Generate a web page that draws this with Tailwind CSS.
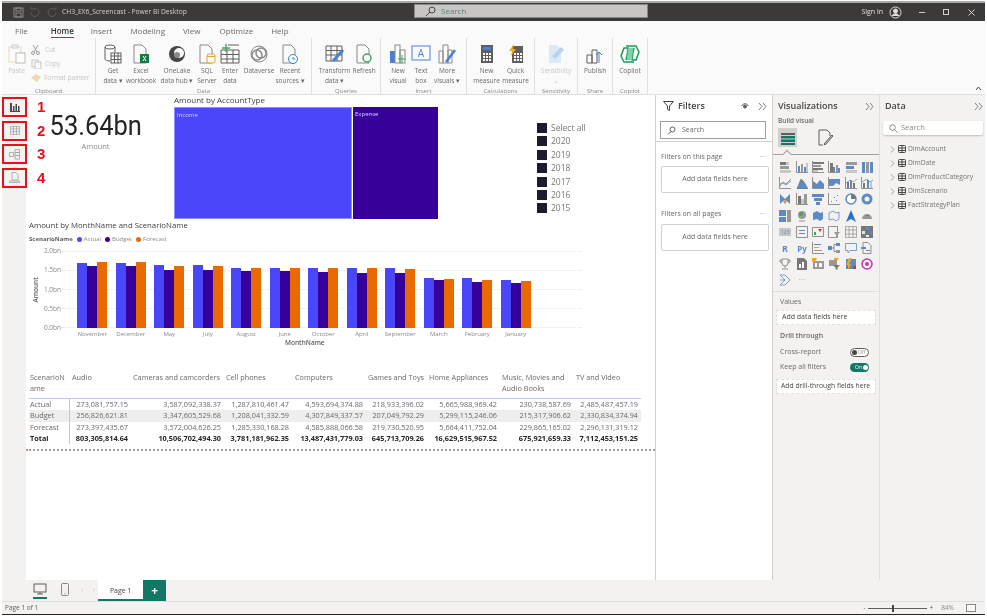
<!DOCTYPE html>
<html lang="en">
<head>
  <meta charset="UTF-8" />
  <title>CH3_EX6_Screencast - Power BI Desktop</title>
  <script src="https://cdn.jsdelivr.net/npm/@tailwindcss/browser@4"></script>
</head>
<body class="bg-white">
<div class="w-[987px] h-[616px] overflow-hidden flex flex-col pt-px px-[2px] font-['Open_Sans',sans-serif] text-[#6b6967] blur-[0.35px]">
  <div class="h-[2px] shrink-0 bg-[#a8a8a8]"></div>

  <!-- title bar -->
  <div class="h-[18px] shrink-0 bg-[#3b3a39] flex items-center relative text-[#d2d0ce]">
    <svg class="ml-[11px]" width="11" height="11" viewBox="0 0 11 11" fill="none" stroke="#8a8886"><rect x="1" y="1" width="9" height="9"/><rect x="3" y="1" width="5" height="3"/><rect x="3" y="6" width="5" height="4"/></svg>
    <svg class="ml-[5px]" width="11" height="11" viewBox="0 0 11 11" fill="none" stroke="#605e5c"><path d="M2 6a4 4 0 1 0 2-4H2V0"/></svg>
    <svg class="ml-[7px]" width="11" height="11" viewBox="0 0 11 11" fill="none" stroke="#605e5c"><path d="M9 6a4 4 0 1 1-2-4h2V0"/></svg>
    <span class="ml-[4px] text-[6.7px]">CH3_EX6_Screencast - Power BI Desktop</span>
    <div class="absolute left-[412px] top-[1px] w-[234px] h-[14px] bg-[#c8c6c4] border border-[#8a8886] flex items-center pl-[10px]">
      <svg width="11" height="11" viewBox="0 0 11 11" fill="none" stroke="#484644"><circle cx="7" cy="4" r="3"/><path d="M5 6 1 10"/></svg>
      <span class="ml-[5px] text-[8px] text-[#5f7f78]">Search</span>
    </div>
    <span class="ml-auto text-[7px] text-[#e1dfdd]">Sign in</span>
    <svg class="ml-[6px]" width="13" height="13" viewBox="0 0 13 13" fill="none" stroke="#e1dfdd"><circle cx="6.5" cy="6.5" r="5.5"/><circle cx="6.5" cy="5" r="2" fill="#e1dfdd"/><path d="M3 10c1-3 6-3 7 0" fill="#e1dfdd"/></svg>
    <span class="ml-[17px] w-[6px] h-px bg-[#d2d0ce]"></span>
    <span class="ml-[18px] w-[6px] h-[6px] border border-[#d2d0ce]"></span>
    <svg class="ml-[19px] mr-[10px]" width="7" height="7" viewBox="0 0 7 7" stroke="#d2d0ce"><path d="M.5.5l6 6M6.5.5l-6 6"/></svg>
  </div>

  <!-- menu -->
  <div class="h-[17px] shrink-0 bg-[#fafafa] flex items-center text-[8px] text-[#6b6967] pt-[3px]">
    <span class="ml-[13px]">File</span>
    <span class="ml-[23px] relative text-[#323130] font-semibold">Home<span class="absolute left-0 right-0 top-[12px] h-[2px] bg-[#117865]"></span></span>
    <span class="ml-[17px]">Insert</span>
    <span class="ml-[18px]">Modeling</span>
    <span class="ml-[18px]">View</span>
    <span class="ml-[19px]">Optimize</span>
    <span class="ml-[18px]">Help</span>
  </div>

  <!-- ribbon -->
  <div class="h-[57px] shrink-0 bg-[#fafafa] border-b border-[#e1dfdd] flex text-[6.5px] leading-[9.5px] text-center relative">
    <section class="w-[94px] border-r border-[#e1dfdd] flex flex-col">
      <div class="flex flex-1 pt-[6px] text-[#c8c6c4]">
        <div class="w-[29px] flex flex-col items-center">
          <svg width="18" height="20" viewBox="0 0 18 20" fill="none"><rect x="1" y="3" width="12" height="15" stroke="#ecd9b0"/><rect x="4" y="1" width="6" height="3" fill="#eee" stroke="#ccc"/><rect x="8" y="9" width="9" height="10" fill="#fff" stroke="#bbb"/></svg>
          <span class="mt-[2px]">Paste</span>
        </div>
        <div class="flex flex-col items-start gap-[4px] text-left pt-px">
          <span class="flex items-center gap-[5px] h-[10px]"><svg width="9" height="10" viewBox="0 0 9 10" fill="none" stroke="#a19f9d"><path d="M2 0l4 7M7 0 3 7"/><circle cx="2" cy="8" r="1.5"/><circle cx="7" cy="8" r="1.5"/></svg>Cut</span>
          <span class="flex items-center gap-[3px] h-[10px]"><svg width="11" height="10" viewBox="0 0 11 10" fill="none" stroke="#c8c6c4"><rect x="1" y="1" width="6" height="7"/><rect x="4" y="3" width="6" height="7" fill="#fafafa"/></svg>Copy</span>
          <span class="flex items-center gap-[2px] h-[10px] whitespace-nowrap"><svg width="11" height="10" viewBox="0 0 11 10" fill="#ecd9b0"><path d="M0 5l5-4 5 3-4 5z"/></svg>Format painter</span>
        </div>
      </div>
      <div class="h-[8px] leading-[10px] text-[#8a8886] text-[6px]">Clipboard</div>
    </section>

    <section class="w-[216px] border-r border-[#e1dfdd] flex flex-col">
      <div class="flex flex-1 pt-[6px] pl-[4px]">
        <div class="w-[26px] flex flex-col items-center">
          <svg width="18" height="20" viewBox="0 0 18 20" fill="none" stroke="#605e5c"><ellipse cx="6" cy="3" rx="5" ry="2"/><path d="M1 3v12c0 1 2 2 5 2M11 3v5"/><rect x="7" y="9" width="10" height="10" fill="#fafafa"/><path d="M7 12h10M7 15.5h10M10.5 9v10M14 9v10"/></svg>
          <span class="mt-[2px]">Get<br>data ▾</span>
        </div>
        <div class="w-[30px] flex flex-col items-center">
          <svg width="18" height="20" viewBox="0 0 18 20" fill="none"><path d="M2 1h8l4 4v14H2z" stroke="#8a8886"/><rect x="8" y="10" width="9" height="9" fill="#107c41"/><path d="M11 12l3 5M14 12l-3 5" stroke="#fff"/></svg>
          <span class="mt-[2px]">Excel<br>workbook</span>
        </div>
        <div class="ml-[3px] w-[36px] flex flex-col items-center">
          <svg width="20" height="20" viewBox="0 0 20 20" fill="none"><circle cx="10" cy="10" r="8" fill="#484644"/><circle cx="12" cy="9" r="5" fill="#fafafa"/><circle cx="10" cy="11" r="3" fill="#8a8886"/></svg>
          <span class="mt-[2px] whitespace-nowrap">OneLake<br>data hub ▾</span>
        </div>
        <div class="w-[24px] flex flex-col items-center">
          <svg width="18" height="20" viewBox="0 0 18 20" fill="none"><path d="M2 1h8l4 4v14H2z" stroke="#8a8886"/><rect x="9" y="10" width="8" height="9" rx="2" fill="#fafafa" stroke="#e8a33d"/><path d="M9 12.5h8" stroke="#e8a33d"/></svg>
          <span class="mt-[2px]">SQL<br>Server</span>
        </div>
        <div class="w-[22px] flex flex-col items-center">
          <svg width="20" height="20" viewBox="0 0 20 20" fill="none" stroke="#605e5c"><path d="M1 6h18v13H1zM1 10.5h18M1 15h18M7 6v13M13 6v13M8 1h11"/><path d="M6 0v8M2 4h8" stroke="#3fa66c" stroke-width="1.5"/></svg>
          <span class="mt-[2px]">Enter<br>data</span>
        </div>
        <div class="w-[36px] flex flex-col items-center">
          <svg width="20" height="20" viewBox="0 0 20 20" fill="none" stroke="#8a8886" stroke-width="1.5"><circle cx="8" cy="11" r="5"/><circle cx="12" cy="9" r="5"/><circle cx="10" cy="10" r="8" stroke-width="1"/></svg>
          <span class="mt-[2px]">Dataverse</span>
        </div>
        <div class="w-[26px] flex flex-col items-center">
          <svg width="18" height="20" viewBox="0 0 18 20" fill="none"><path d="M2 1h8l4 4v14H2z" stroke="#8a8886"/><circle cx="12" cy="15" r="4.5" fill="#fafafa" stroke="#2b88d8"/><path d="M12 13v2h2" stroke="#2b88d8"/></svg>
          <span class="mt-[2px] whitespace-nowrap">Recent<br>sources ▾</span>
        </div>
      </div>
      <div class="h-[8px] leading-[10px] text-[#8a8886] text-[6px]">Data</div>
    </section>

    <section class="w-[69px] border-r border-[#e1dfdd] flex flex-col">
      <div class="flex flex-1 pt-[6px] pl-[3px]">
        <div class="w-[39px] flex flex-col items-center">
          <svg width="20" height="20" viewBox="0 0 20 20" fill="none"><path d="M1 2h16v15H1zM1 6.5h16M1 11h16M6 2v15M12 2v15" stroke="#605e5c"/><path d="M8 17 18 6" stroke="#4a7fd6" stroke-width="3"/></svg>
          <span class="mt-[2px] whitespace-nowrap">Transform<br>data ▾</span>
        </div>
        <div class="w-[20px] flex flex-col items-center">
          <svg width="18" height="20" viewBox="0 0 18 20" fill="none"><path d="M2 1h8l4 4v14H2z" stroke="#8a8886"/><circle cx="12" cy="14" r="4" fill="#fafafa" stroke="#3fa66c" stroke-width="1.5"/></svg>
          <span class="mt-[2px]">Refresh</span>
        </div>
      </div>
      <div class="h-[8px] leading-[10px] text-[#8a8886] text-[6px]">Queries</div>
    </section>

    <section class="w-[86px] border-r border-[#e1dfdd] flex flex-col">
      <div class="flex flex-1 pt-[6px] pl-[7px]">
        <div class="w-[20px] flex flex-col items-center">
          <svg width="18" height="20" viewBox="0 0 18 20" fill="none"><rect x="1" y="7" width="5" height="12" fill="#4a7fd6"/><rect x="6" y="1" width="5" height="18" stroke="#8a8886"/><rect x="11" y="6" width="5" height="13" stroke="#8a8886"/><path d="M13 11v8M9 15h8" stroke="#3fa66c"/></svg>
          <span class="mt-[2px]">New<br>visual</span>
        </div>
        <div class="w-[26px] flex flex-col items-center">
          <svg width="20" height="20" viewBox="0 0 20 20" fill="none"><rect x="1" y="2" width="18" height="14" stroke="#4a7fd6"/><text x="10" y="13" text-anchor="middle" font-size="10" fill="#4a7fd6">A</text></svg>
          <span class="mt-[2px]">Text<br>box</span>
        </div>
        <div class="w-[26px] flex flex-col items-center">
          <svg width="18" height="20" viewBox="0 0 18 20" fill="none"><path d="M1 7h4v12H1zM5 1h5v18H5zM10 6h4v13h-4z" stroke="#8a8886"/><path d="M8 18 17 6" stroke="#4a7fd6" stroke-width="2.5"/></svg>
          <span class="mt-[2px] whitespace-nowrap">More<br>visuals ▾</span>
        </div>
      </div>
      <div class="h-[8px] leading-[10px] text-[#8a8886] text-[6px]">Insert</div>
    </section>

    <section class="w-[68px] border-r border-[#e1dfdd] flex flex-col">
      <div class="flex flex-1 pt-[6px] pl-[5px]">
        <div class="w-[29px] flex flex-col items-center">
          <svg width="14" height="20" viewBox="0 0 14 20"><rect x="1" y="1" width="12" height="18" fill="#605e5c"/><rect x="3" y="3" width="8" height="3" fill="#4a7fd6"/><path d="M3 9h2v2H3zM6 9h2v2H6zM9 9h2v2H9zM3 12h2v2H3zM6 12h2v2H6zM9 12h2v2H9zM3 15h2v2H3zM6 15h2v2H6zM9 15h2v2H9z" fill="#fff"/></svg>
          <span class="mt-[2px]">New<br>measure</span>
        </div>
        <div class="w-[29px] flex flex-col items-center">
          <svg width="16" height="20" viewBox="0 0 16 20"><rect x="4" y="2" width="11" height="17" fill="#605e5c"/><path d="M6 9h2v2H6zM9 9h2v2H9zM12 9h2v2h-2zM6 12h2v2H6zM9 12h2v2H9zM12 12h2v2h-2zM6 15h2v2H6zM9 15h2v2H9zM12 15h2v2h-2z" fill="#fff"/><path d="M6 0 1 7h3l-1 5 5-7H5z" fill="#f2a71b"/></svg>
          <span class="mt-[2px]">Quick<br>measure</span>
        </div>
      </div>
      <div class="h-[8px] leading-[10px] text-[#8a8886] text-[6px]">Calculations</div>
    </section>

    <section class="w-[43px] border-r border-[#e1dfdd] flex flex-col">
      <div class="flex flex-col flex-1 pt-[6px] items-center text-[#c8c6c4]">
        <svg width="18" height="20" viewBox="0 0 18 20" fill="#dbe8f5"><path d="M2 1h8l4 4v14H2z"/><path d="M5 12 14 3l3 3-9 9z" fill="#b9d3ec"/></svg>
        <span class="mt-[2px]">Sensitivity<br>⌄</span>
      </div>
      <div class="h-[8px] leading-[10px] text-[#8a8886] text-[6px]">Sensitivity</div>
    </section>

    <section class="w-[35px] border-r border-[#e1dfdd] flex flex-col">
      <div class="flex flex-col flex-1 pt-[6px] items-center">
        <svg width="18" height="20" viewBox="0 0 18 20" fill="none"><path d="M1 11h5v8H1zM6 6h5v13H6zM11 10h1" stroke="#605e5c"/><path d="M13 19V8M10 11l3-3 3 3" stroke="#4a7fd6"/></svg>
        <span class="mt-[2px]">Publish</span>
      </div>
      <div class="h-[8px] leading-[10px] text-[#8a8886] text-[6px]">Share</div>
    </section>

    <section class="w-[35px] border-r border-[#e1dfdd] flex flex-col">
      <div class="flex flex-col flex-1 pt-[6px] items-center">
        <svg width="20" height="20" viewBox="0 0 20 20" fill="none" stroke="#1b9a5f" stroke-width="1.5"><path d="M6 2h10l3 6-3 8h-4l1-8 1-4M14 18H4L1 12l3-8h4l-1 8-1 4"/><path d="M8 4h5l-1 12H7z" fill="#7fd1a8" stroke="none"/></svg>
        <span class="mt-[2px]">Copilot</span>
      </div>
      <div class="h-[8px] leading-[10px] text-[#8a8886] text-[6px]">Copilot</div>
    </section>

    <svg class="absolute right-[3px] bottom-[3px]" width="7" height="5" viewBox="0 0 7 5" fill="none" stroke="#484644"><path d="M1 4l2.5-3L6 4"/></svg>
  </div>

  <!-- main -->
  <div class="h-[485px] shrink-0 flex">
    <!-- view rail -->
    <div class="w-[24px] shrink-0 bg-[#f3f2f1] flex flex-col pt-[2px] gap-[3.5px] relative z-10">
      <div class="w-[25px] h-[20px] border-2 border-[#e8101a] flex items-center justify-center relative">
        <svg width="10" height="9" viewBox="0 0 10 9" fill="#484644"><path d="M1 0h1v8h8v1H0V0zM3 3h1.5v5H3zM5.5 1H7v7H5.5zM8 3h1.500v5H8z"/></svg>
        <span class="absolute left-[33px] -top-[1px] text-[15px] leading-[18px] font-bold text-[#e8101a] font-['Liberation_Sans',sans-serif]">1</span>
      </div>
      <div class="w-[25px] h-[20px] border-2 border-[#e8101a] flex items-center justify-center relative">
        <svg width="10" height="9" viewBox="0 0 10 9" fill="none" stroke="#a19f9d" stroke-width=".7"><path d="M.5.5h9v8h-9zM.5 3h9M.5 5.7h9M3.500.5v8M6.500.5v8"/></svg>
        <span class="absolute left-[33px] -top-[1px] text-[15px] leading-[18px] font-bold text-[#e8101a] font-['Liberation_Sans',sans-serif]">2</span>
      </div>
      <div class="w-[25px] h-[20px] border-2 border-[#e8101a] flex items-center justify-center relative">
        <svg width="11" height="11" viewBox="0 0 11 11" fill="none" stroke="#a19f9d" stroke-width=".8"><path d="M.5 3.5h4v4h-4zM6 .5h4.500v3H6zM6 3.500h4.500v3H6zM6 6.500h4.500v3.500H6z"/></svg>
        <span class="absolute left-[33px] -top-[1px] text-[15px] leading-[18px] font-bold text-[#e8101a] font-['Liberation_Sans',sans-serif]">3</span>
      </div>
      <div class="w-[25px] h-[20px] border-2 border-[#e8101a] flex items-center justify-center relative">
        <svg width="11" height="11" viewBox="0 0 11 11" fill="none" stroke="#a19f9d" stroke-width=".8"><path d="M3 .5h4l2 2.500v5H3zM.5 9h10v1.500H.5z"/></svg>
        <span class="absolute left-[33px] -top-[1px] text-[15px] leading-[18px] font-bold text-[#e8101a] font-['Liberation_Sans',sans-serif]">4</span>
      </div>
    </div>

    <!-- report canvas -->
    <div class="w-[630px] shrink-0 bg-white border-r border-[#d2d0ce] flex flex-col">
      <div class="flex h-[124px] shrink-0">
        <div class="w-[148px] shrink-0 flex flex-col items-center pt-[16px] pr-[9px]">
          <span class="text-[28px] leading-[30px] text-[#252423] font-['Roboto',sans-serif] scale-x-[0.91] whitespace-nowrap">53.64bn</span>
          <span class="text-[7.5px] text-[#8a8886]">Amount</span>
        </div>
        <div class="w-[264px] shrink-0 flex flex-col">
          <div class="h-[12px] text-[8px] leading-[10px] text-[#404040] whitespace-nowrap">Amount by AccountType</div>
          <div class="flex h-[112px] gap-px text-[6px] text-[#d8d8ff]">
            <div class="w-[178px] bg-[#4a47fb] pl-[2px] pt-[3px] border border-[#8f8dff]">Income</div>
            <div class="flex-1 bg-[#38009b] pl-[2px] pt-[3px]">Expense</div>
          </div>
        </div>
        <ul class="ml-[99px] mt-[28px] flex flex-col gap-[3.4px] text-[8.5px] leading-[10px] text-[#777]">
          <li class="flex items-center gap-[4px]"><span class="w-[10px] h-[10px] bg-[#1f1b2e]"></span>Select all</li>
          <li class="flex items-center gap-[4px]"><span class="w-[10px] h-[10px] bg-[#1f1b2e]"></span>2020</li>
          <li class="flex items-center gap-[4px]"><span class="w-[10px] h-[10px] bg-[#1f1b2e]"></span>2019</li>
          <li class="flex items-center gap-[4px]"><span class="w-[10px] h-[10px] bg-[#1f1b2e]"></span>2018</li>
          <li class="flex items-center gap-[4px]"><span class="w-[10px] h-[10px] bg-[#1f1b2e]"></span>2017</li>
          <li class="flex items-center gap-[4px]"><span class="w-[10px] h-[10px] bg-[#1f1b2e]"></span>2016</li>
          <li class="flex items-center gap-[4px]"><span class="w-[10px] h-[10px] bg-[#1f1b2e]"></span>2015</li>
        </ul>
      </div>

      <!-- column chart -->
      <div class="h-[128px] shrink-0 pl-[3px] flex flex-col">
        <div class="text-[7.8px] leading-[10px] text-[#404040] h-[16px] pt-[1px]">Amount by MonthName and ScenarioName</div>
        <div class="flex items-center gap-[2px] text-[6px] leading-[8px] h-[8px] text-[#8a8886]">
          <span class="font-bold text-[#605e5c] mr-[2px]">ScenarioName</span>
          <span class="w-[5px] h-[5px] rounded-full bg-[#4a47fb]"></span>Actual
          <span class="w-[5px] h-[5px] rounded-full bg-[#38009b] ml-[2px]"></span>Budget
          <span class="w-[5px] h-[5px] rounded-full bg-[#e96a00] ml-[2px]"></span>Forecast
        </div>
        <div class="flex mt-[5px]">
          <div class="w-[13px] flex items-center justify-center"><span class="-rotate-90 text-[6.5px] font-semibold text-[#605e5c]">Amount</span></div>
          <div class="w-[19px] h-[83px] flex flex-col justify-between text-[6.5px] leading-[6px] text-[#8a8886] text-right">
            <span>2.0bn</span><span>1.5bn</span><span>1.0bn</span><span>0.5bn</span><span>0.0bn</span>
          </div>
          <div class="relative ml-[1px] w-[520px]">
            <div class="absolute inset-x-0 top-[3px] h-[77px] flex flex-col justify-between">
              <i class="border-t border-dotted border-[#e5e5e5]"></i><i class="border-t border-dotted border-[#e5e5e5]"></i><i class="border-t border-dotted border-[#e5e5e5]"></i><i class="border-t border-dotted border-[#e5e5e5]"></i><i class="border-t border-dotted border-[#e5e5e5]"></i>
            </div>
            <div id="bars" class="relative h-[80px] flex items-end pl-[15px] gap-[8.5px]"></div>
          </div>
        </div>
      </div>
      <div id="months" class="flex pl-[47px] h-[8px] text-[6px] leading-[8px] text-[#8a8886] -mt-[17px]"></div>
      <div class="pl-[259px] text-[6.5px] leading-[8px] font-semibold text-[#605e5c] mt-[1px]">MonthName</div>

      <!-- matrix -->
      <div class="mt-[23px] ml-[3px] w-[612px] text-[7.3px] leading-[11.3px] text-[#6b6967]">
        <div class="grid grid-cols-[41px_61px_93px_68px_74px_61px_73px_74px_67px] h-[29px] border-b border-[#b6c8f2] pt-[2px]">
          <div class="pl-[1px] pr-[3px] break-all">ScenarioName</div>
          <div class="pl-[2px]">Audio</div>
          <div class="pl-[2px]">Cameras and camcorders</div>
          <div class="pl-[2px]">Cell phones</div>
          <div class="pl-[3px]">Computers</div>
          <div class="pl-[2px] whitespace-nowrap">Games and Toys</div>
          <div class="pl-[2px] whitespace-nowrap">Home Appliances</div>
          <div class="pl-[2px]">Music, Movies and Audio Books</div>
          <div class="pl-[2px]">TV and Video</div>
        </div>
        <div id="rows"></div>
      </div>
      <div class="mt-[5px] border-t-2 border-dotted border-[#a19f9d]"></div>
    </div>

    <!-- filters -->
    <div class="w-[117px] shrink-0 bg-white border-r border-[#d2d0ce] flex flex-col">
      <div class="h-[22px] flex items-center pl-[7px] pr-[5px]">
        <svg width="11" height="10" viewBox="0 0 11 10" fill="none" stroke="#484644"><path d="M.5.5h10L6.500 5v4.500l-2-1V5z"/></svg>
        <span class="ml-[4px] text-[9px] font-semibold text-[#484644]">Filters</span>
        <svg class="ml-auto" width="8" height="6" viewBox="0 0 8 6" fill="none" stroke="#605e5c"><path d="M.5 3c2-3 5-3 7 0"/><circle cx="4" cy="3.5" r="1.5" fill="#605e5c"/></svg>
        <svg class="ml-[9px]" width="9" height="9" viewBox="0 0 9 9" fill="none" stroke="#605e5c" stroke-width=".8"><path d="M1 1l3 3.500-3 3.500M5 1l3 3.500-3 3.500"/></svg>
      </div>
      <div class="mt-[4px] ml-[4px] w-[106px] h-[18px] border border-[#a19f9d] flex items-center pl-[6px] text-[7px]">
        <svg width="9" height="9" viewBox="0 0 9 9" fill="none" stroke="#605e5c"><circle cx="5.5" cy="3.5" r="2.5"/><path d="M4 5.5 1 8.5"/></svg>
        <span class="ml-[6px]">Search</span>
      </div>
      <div class="mt-[2px] h-[1px] bg-[#d2d0ce]"></div>
      <div class="flex items-center justify-between pl-[5px] pr-[7px] mt-[10px] h-[10px] text-[7px]"><span>Filters on this page</span><span class="text-[#a19f9d]">···</span></div>
      <div class="mt-[4px] ml-[5px] w-[108px] h-[27px] border border-[#d2d0ce] rounded-[2px] flex items-center justify-center text-[7px]">Add data fields here</div>
      <div class="flex items-center justify-between pl-[5px] pr-[7px] mt-[16px] h-[10px] text-[7px]"><span>Filters on all pages</span><span class="text-[#a19f9d]">···</span></div>
      <div class="mt-[5px] ml-[5px] w-[108px] h-[27px] border border-[#d2d0ce] rounded-[2px] flex items-center justify-center text-[7px]">Add data fields here</div>
    </div>

    <!-- visualizations -->
    <div class="w-[107px] shrink-0 bg-[#f3f2f1] border-r border-[#e1dfdd] flex flex-col">
      <div class="h-[21px] flex items-center pl-[5px] pt-[1px] pr-[5px] justify-between">
        <span class="text-[9px] font-semibold text-[#484644]">Visualizations</span>
        <svg width="9" height="9" viewBox="0 0 9 9" fill="none" stroke="#605e5c" stroke-width=".8"><path d="M1 1l3 3.500-3 3.500M5 1l3 3.500-3 3.500"/></svg>
      </div>
      <div class="pl-[5px] text-[6.5px] leading-[9px] font-semibold h-[11px]">Build visual</div>
      <div class="flex items-center h-[21px] pl-[5px]">
        <div class="w-[19px] h-[19px] bg-[#d2d0ce] flex items-center justify-center">
          <svg width="14" height="14" viewBox="0 0 14 14"><path d="M0 2h14v2H0z" fill="#605e5c"/><path d="M0 5h14v2.500H0zM0 8.500h14V11H0zM0 12h14v2H0z" fill="#117865"/></svg>
        </div>
        <svg class="ml-[21px]" width="16" height="18" viewBox="0 0 16 18" fill="none" stroke="#605e5c"><path d="M1 1h8l3 3v3M1 1v15h4"/><path d="M6 15 14 6l1 1-8 9z" fill="#c8c6c4"/></svg>
      </div>
      <div class="relative mt-[6px] h-px bg-[#a19f9d]"><span class="absolute left-[11px] -top-[3px] w-[6px] h-[6px] rotate-45 bg-[#f3f2f1] border-l border-t border-[#a19f9d]"></span></div>
      <div id="viz" class="grid grid-cols-[repeat(6,16.4px)] auto-rows-[16.2px] pl-[4px] mt-[4px] h-[132px] justify-items-center items-center"></div>
      <div class="h-px bg-[#e1dfdd]"></div>
      <div class="pl-[7px] mt-[5px] text-[7px] leading-[10px] h-[13px]">Values</div>
      <div class="mx-[3px] h-[15px] bg-white border border-dashed border-[#e1dfdd] flex items-center pl-[5px] text-[7px] text-[#484644]">Add data fields here</div>
      <div class="pl-[7px] mt-[6px] text-[7px] leading-[10px] font-semibold h-[12px]">Drill through</div>
      <div class="flex items-center justify-between pl-[7px] pr-[10px] mt-[2px] h-[15px] text-[7px]">
        <span>Cross-report</span>
        <span class="w-[19px] h-[9px] rounded-full border border-[#605e5c] bg-white flex items-center pl-[1px] text-[5px] leading-[5px] text-[#8a8886]"><i class="w-[5px] h-[5px] rounded-full bg-[#484644] mr-[1px]"></i>Off</span>
      </div>
      <div class="flex items-center justify-between pl-[7px] pr-[10px] h-[15px] text-[7px]">
        <span>Keep all filters</span>
        <span class="w-[19px] h-[9px] rounded-full bg-[#117865] flex items-center justify-end pr-[1px] text-[5px] leading-[5px] text-white">On<i class="w-[5px] h-[5px] rounded-full bg-white ml-[1px]"></i></span>
      </div>
      <div class="mx-[3px] mt-[4px] h-[15px] bg-white border border-dashed border-[#e1dfdd] flex items-center pl-[4px] text-[6.8px] text-[#484644] whitespace-nowrap">Add drill-through fields here</div>
    </div>

    <!-- data -->
    <div class="flex-1 bg-[#f3f2f1] flex flex-col">
      <div class="h-[21px] flex items-center pl-[5px] pt-[1px] pr-[2px] justify-between">
        <span class="text-[9px] font-semibold text-[#484644]">Data</span>
        <svg width="9" height="9" viewBox="0 0 9 9" fill="none" stroke="#605e5c" stroke-width=".8"><path d="M1 1l3 3.500-3 3.500M5 1l3 3.500-3 3.500"/></svg>
      </div>
      <div class="mt-[5px] ml-[3px] w-[100px] h-[14px] bg-white rounded-[2px] shadow-[0_1px_2px_#bbb] flex items-center pl-[6px] text-[7.5px] text-[#8a8886]">
        <svg width="9" height="9" viewBox="0 0 9 9" fill="none" stroke="#8a8886"><circle cx="3.5" cy="3.500" r="2.8"/><path d="M5.500 5.500l3 3"/></svg>
        <span class="ml-[3px]">Search</span>
      </div>
      <ul id="tables" class="mt-[7px] pl-[10px] text-[6.7px] leading-[14px] text-[#757371]"></ul>
    </div>
  </div>

  <!-- page tabs -->
  <div class="h-[22px] shrink-0 bg-[#f3f2f1] flex border-b border-[#e1dfdd]">
    <div class="relative ml-[28px] w-[20px] flex justify-center pt-[3px]">
      <svg width="14" height="12" viewBox="0 0 14 12" fill="none" stroke="#605e5c"><rect x="1" y="1" width="12" height="8"/><path d="M7 9v2M4 11h6"/></svg>
      <span class="absolute left-[3px] right-[3px] top-[17px] h-[2px] bg-[#117865]"></span>
    </div>
    <div class="ml-[11px] pt-[3px]">
      <svg width="8" height="13" viewBox="0 0 8 13" fill="none" stroke="#8a8886"><rect x=".5" y=".5" width="7" height="12" rx="1"/><path d="M3.5 10.5h1"/></svg>
    </div>
    <span class="ml-[12px] pt-[5px] text-[7px] leading-[9px] text-[#c8c6c4]">‹</span>
    <span class="ml-[10px] pt-[5px] text-[7px] leading-[9px] text-[#c8c6c4]">›</span>
    <div class="ml-[3px] w-[45px] h-[21px] bg-white border-b-2 border-[#117865] flex items-center justify-center pt-[4px] text-[7px] text-[#484644]">Page 1</div>
    <div class="w-[23px] h-[21px] bg-[#117865] flex items-center justify-center text-white text-[12px] font-bold">+</div>
  </div>

  <!-- status bar -->
  <div class="h-[12px] shrink-0 bg-[#f3f2f1] flex items-center text-[6.5px] text-[#605e5c] pl-[3px]">
    <span>Page 1 of 1</span>
    <div class="ml-auto flex items-center">
      <span>-</span>
      <div class="relative ml-[3px] w-[59px] h-px bg-[#605e5c]"><span class="absolute left-[24px] -top-[3px] w-[2px] h-[7px] bg-[#484644]"></span></div>
      <span class="ml-[2px]">+</span>
      <span class="ml-[8px] text-[#8a8886]">84%</span>
      <span class="ml-[12px] mr-[9px] w-[10px] h-[8px] border border-[#8a8886] bg-[#f8f8f8]"></span>
    </div>
  </div>
  <div class="h-[1px] shrink-0 bg-[#252423]"></div>
</div>

<script>
  const months = [
    ['November', 1.70, 1.62, 1.72], ['December', 1.70, 1.61, 1.71], ['May', 1.63, 1.52, 1.62],
    ['July', 1.63, 1.50, 1.60], ['August', 1.57, 1.47, 1.56], ['June', 1.57, 1.47, 1.56],
    ['October', 1.57, 1.46, 1.55], ['April', 1.55, 1.44, 1.55], ['September', 1.55, 1.42, 1.53],
    ['March', 1.31, 1.24, 1.28], ['February', 1.31, 1.20, 1.26], ['January', 1.25, 1.17, 1.23]
  ];
  const bars = document.getElementById('bars');
  const labels = document.getElementById('months');
  months.forEach(m => {
    const h = v => 'height:' + (v * 38.5).toFixed(1) + 'px';
    bars.innerHTML += `<div class="flex items-end w-[30px]">
      <div class="w-[10px] bg-[#4a47fb]" style="${h(m[1])}"></div>
      <div class="w-[10px] bg-[#38009b]" style="${h(m[2])}"></div>
      <div class="w-[10px] bg-[#e96a00]" style="${h(m[3])}"></div>
    </div>`;
    labels.innerHTML += `<span class="w-[38.5px] shrink-0 text-center">${m[0]}</span>`;
  });

  const rows = [
    ['Actual', '273,081,757.15', '3,587,092,338.37', '1,287,810,461.47', '4,593,694,374.88', '218,933,396.02', '5,665,988,969.42', '230,738,587.69', '2,485,487,457.19'],
    ['Budget', '256,826,621.81', '3,347,605,529.68', '1,208,041,332.59', '4,307,849,337.57', '207,049,792.29', '5,299,115,246.06', '215,317,906.62', '2,330,834,374.94'],
    ['Forecast', '273,397,435.67', '3,572,004,626.25', '1,285,330,168.28', '4,585,888,066.58', '219,730,520.95', '5,664,411,752.04', '229,865,165.02', '2,296,131,319.12'],
    ['Total', '803,305,814.64', '10,506,702,494.30', '3,781,181,962.35', '13,487,431,779.03', '645,713,709.26', '16,629,515,967.52', '675,921,659.33', '7,112,453,151.25']
  ];
  document.getElementById('rows').innerHTML = rows.map((r, i) => {
    const rowClass = i === 1 ? 'bg-[#eeeeee]' : i === 3 ? 'font-bold text-[#252423]' : '';
    return `<div class="grid grid-cols-[41px_61px_93px_68px_74px_61px_73px_74px_67px] h-[11.3px] ${rowClass}">
      ${r.map((c, j) => j === 0
        ? `<div class="pl-[1px] border-r border-[#b6c8f2]">${c}</div>`
        : `<div class="text-right pr-[3px] whitespace-nowrap">${c}</div>`).join('')}
    </div>`;
  }).join('');

  document.getElementById('tables').innerHTML = ['DimAccount', 'DimDate', 'DimProductCategory', 'DimScenario', 'FactStrategyPlan'].map(n => `
    <li class="flex items-center h-[14px]">
      <svg width="5" height="7" viewBox="0 0 5 7" fill="none" stroke="#a19f9d"><path d="M1 .5l3 3-3 3"/></svg>
      <svg class="ml-[3px]" width="8" height="8" viewBox="0 0 8 8" fill="none" stroke="#484644"><rect x=".5" y=".5" width="7" height="7" rx="1"/><path d="M.5 3h7M.5 5.5h7M4 .5v7"/></svg>
      <span class="ml-[2px] whitespace-nowrap">${n}</span>
    </li>`).join('');

  // viz gallery, rough shapes drawn from rects and paths
  const G = '#9a9896', B = '#5b8ac7', D = '#7a7876', L = '#c8c6c4';
  const r = (x, y, w, h, c) => `<rect x="${x}" y="${y}" width="${w}" height="${h}" fill="${c}"/>`;
  const p = (d, c) => `<path d="${d}" fill="${c}"/>`;
  const s = (d, c) => `<path d="${d}" fill="none" stroke="${c}"/>`;
  const axis = s('M.5 0v11.5H12', D);
  const icons = [
    r(1,1,6,3,D)+r(7,1,3,3,L)+r(1,5,9,3,G)+r(1,9,11,3,L),
    axis+r(2,5,2,6,B)+r(5,3,2,8,G)+r(8,6,2,5,B)+r(10,2,2,9,L),
    axis+r(1,1,11,2,D)+r(1,4,8,2,G)+r(1,7,10,2,D)+r(1,9,5,2,L),
    axis+r(2,2,3,9,D)+r(5,6,2,5,B)+r(8,4,2,7,G)+r(10,7,2,4,B),
    r(1,1,11,3,G)+r(1,5,8,3,B)+r(1,9,11,3,L),
    r(1,1,3,11,B)+r(5,1,3,11,G)+r(9,1,3,11,B),
    axis+s('M1 9 4 5l3 2 5-5', D)+s('M1 7l3-1 3 2 5-4', B),
    p('M1 12 5 2l3 3 4 7z', B)+s('M1 12 5 2l3 3 4 7z', D),
    axis+p('M1 11V4l4 3 3-4 4 4v4z', B),
    axis+p('M1 9V2h11v6l-4-2-3 3z', B),
    axis+r(2,5,2,6,D)+r(5,3,2,8,B)+r(8,6,2,5,D)+s('M1 6l4-3 3 2 4-3', G),
    axis+r(2,6,2,5,D)+r(6,3,2,8,B)+r(9,5,2,6,L)+s('M1 5l5-3 3 3 3-2', B),
    p('M1 1l5 5 5-5v10l-3-3-2 3-2-3-3 3z', B)+p('M4 7l2 3 2-3z', '#f2a71b'),
    axis+r(2,3,3,8,D)+r(5,6,3,5,L)+r(8,1,3,10,G),
    r(0,1,12,3,B)+r(2,5,8,3,B)+r(4,9,4,3,B),
    axis+r(3,8,1,1,B)+r(6,4,1,1,B)+r(9,2,1,1,D)+r(8,7,1,1,B),
    `<circle cx="6" cy="6" r="5" fill="#fff" stroke="${B}" stroke-width="1.5"/>`+p('M6 6V1a5 5 0 0 1 5 5z', D),
    `<circle cx="6" cy="6" r="4" fill="none" stroke="${B}" stroke-width="3"/>`,
    r(0,0,7,6,B)+r(0,7,7,5,B)+r(8,0,4,12,G),
    `<circle cx="6" cy="5" r="4" fill="${G}"/><circle cx="5" cy="4" r="2" fill="#3fa66c"/>`+s('M3 11h6', D),
    p('M1 3l4-2 3 2 3-1v7l-3 2-3-2-4 1z', B),
    s('M1 3l4-2 3 2 3-1v7l-3 2-3-2-4 1z', B),
    p('M6 0 11 12 6 9 1 12z', '#2b6fc7'),
    p('M1 9a5 5 0 0 1 10 0z', G)+r(5,5,3,1,D),
    r(0,2,12,8,L)+`<text x="6" y="8" font-size="5" text-anchor="middle" fill="${B}">123</text>`,
    s('M.5.5h11v11H.5z', D)+r(3,4,6,1,B)+r(3,7,6,1,B),
    s('M.5 1.5h11v9H.5z', D)+r(2,6,2,3,'#3fa66c')+p('M6 3h4l-2 3z', '#d13438'),
    s('M.5.5h9v11H.5z', D)+p('M6 6h6L9.5 9v3L8 11V9z', G),
    s('M.5.5h11v11H.5zM.5 4h11M.5 8h11M4 .5v11M8 .5v11', G),
    r(0,0,12,12,D)+r(1,5,3,3,'#dbe8f5')+r(5,1,3,3,B)+r(9,5,2,3,B)+r(5,9,3,2,'#dbe8f5'),
    `<text x="6" y="10" font-size="9" font-weight="700" text-anchor="middle" fill="${B}">R</text>`,
    `<text x="6" y="10" font-size="8" font-weight="700" text-anchor="middle" fill="${B}">Py</text>`,
    s('M.5 0v11.5H12', D)+r(2,2,7,1,B)+r(2,5,5,1,'#f2a71b')+r(2,8,8,1,G),
    r(0,4,4,4,B)+r(8,1,4,3,B)+r(8,8,4,3,G)+s('M4 6h2M6 2.5v7M6 2.5h2M6 9.5h2', D),
    s('M.5 1.5h11v7H5L3 11V8.5H.5z', B),
    s('M2 .5h5l3 3v8H2z', D)+r(0,5,5,2,B)+r(5,8,4,1,B),
    s('M3 1h6v4a3 3 0 0 1-6 0zM3 2H1v2l2 1M9 2h2v2L9 5M6 8v2M3 11h6', D),
    p('M1 0h7l3 3v9H1z', D)+r(3,6,2,4,'#fff')+r(6,4,2,6,'#fff'),
    r(1,3,11,8,G)+r(3,5,2,4,'#fff')+r(7,5,3,4,'#fff')+p('M0 0h5L3 4H0z', '#f2a71b'),
    p('M6 0h5L8 4H6z', '#f2a71b')+r(1,2,8,6,G)+p('M5 7h7L9.5 9.5V12L7.5 11V9.5z', D),
    r(1,1,10,10,B)+p('M4 0h3L4 6H6L3 12 3 7H1z', '#f2a71b')+r(8,8,3,3,'#d13438'),
    `<circle cx="6" cy="6" r="5" fill="none" stroke="#c239b3" stroke-width="1.5"/><circle cx="6" cy="6" r="2" fill="#c239b3"/>`,
    s('M1 1h5l5 5-5 5H1l5-5z', B)+s('M1 6h5', B),
    `<text x="6" y="8" font-size="8" text-anchor="middle" fill="${G}">···</text>`
  ];
  document.getElementById('viz').innerHTML = icons.map(i => `<svg width="12" height="12" viewBox="0 0 12 12" stroke-width=".8">${i}</svg>`).join('');
</script>
</body>
</html>
